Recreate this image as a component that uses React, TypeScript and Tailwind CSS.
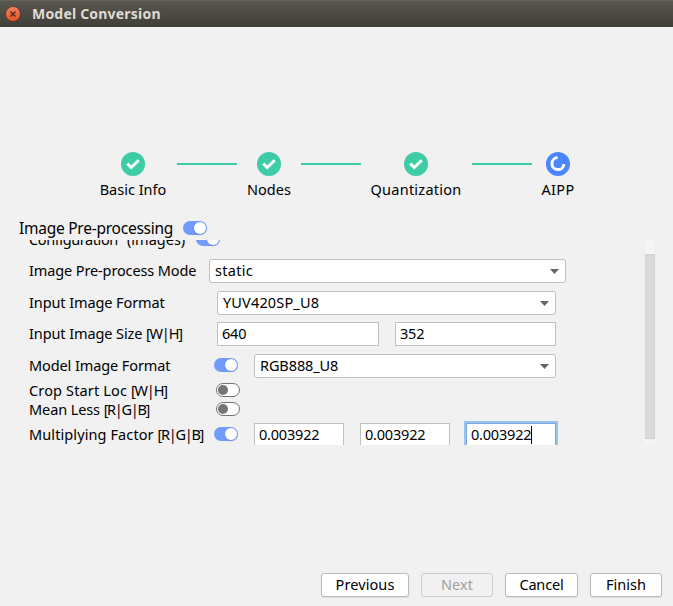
import type { ReactNode } from "react";

function DoneIcon() {
  return (
    <svg width="24" height="24" viewBox="0 0 24 24" className="block">
      <circle cx="12" cy="12" r="12" fill="#3dcca6" />
      <path d="M6.3 11.6 L10.3 15.5 L17.7 8.2" fill="none" stroke="#fff" strokeWidth="3" />
    </svg>
  );
}

function ActiveIcon() {
  return (
    <svg width="24" height="24" viewBox="0 0 24 24" className="block">
      <circle cx="12" cy="12" r="12" fill="#4a86ff" />
      <path d="M11.6 5.6 A6 6 0 1 0 17.9 12" fill="none" stroke="#fff" strokeWidth="3" />
    </svg>
  );
}

function Step({ label, className, active }: { label: string; className: string; active?: boolean }) {
  return (
    <div className={`flex flex-col items-center ${className}`}>
      {active ? <ActiveIcon /> : <DoneIcon />}
      <span className="mt-px leading-[24px]">{label}</span>
    </div>
  );
}

function Line({ className }: { className: string }) {
  return <div className={`mt-[11px] mr-[10px] h-[2px] w-[60px] bg-[#3dcca6] ${className}`} />;
}

function Toggle({ on, className = "" }: { on?: boolean; className?: string }) {
  return on ? (
    <div className={`flex h-[14px] w-6 shrink-0 items-center justify-end rounded-full bg-[#729bfb] ${className}`}>
      <div className="mr-px size-3 rounded-full bg-white shadow-sm" />
    </div>
  ) : (
    <div className={`flex h-[14px] w-6 shrink-0 items-center rounded-full border border-[#727272] bg-white ${className}`}>
      <div className="ml-px size-[10px] rounded-full bg-[#757575]" />
    </div>
  );
}

function Select({ children, className }: { children: ReactNode; className: string }) {
  return (
    <div className={`flex h-6 shrink-0 items-center justify-between rounded-[3px] border border-[#c0c0c0] bg-white pr-[6px] pl-[5px] ${className}`}>
      <span>{children}</span>
      <svg width="9" height="5" viewBox="0 0 9 5">
        <path d="M0 0H9L4.5 5Z" fill="#666" />
      </svg>
    </div>
  );
}

function Field({ children, className }: { children: ReactNode; className: string }) {
  return (
    <div className={`flex h-6 shrink-0 items-center border bg-white pl-1 ${className}`}>
      {children}
    </div>
  );
}

function Button({ children, className }: { children: ReactNode; className: string }) {
  return (
    <button className={`h-6 rounded-[3px] border pb-[2px] leading-[20px] ${className}`}>{children}</button>
  );
}

const enabled = "border-[#b9b9b9] bg-white shadow-[0_1px_1px_rgba(0,0,0,0.08)]";

export default function App() {
  return (
    <div className="flex h-[606px] w-[673px] flex-col overflow-hidden bg-[#f1f1f1] font-['Noto_Sans','Open_Sans',sans-serif] text-[14.5px] whitespace-nowrap text-black">
      <header className="flex h-[27px] items-center border-t border-[#66645a] bg-linear-to-b from-[#59574f] to-[#3f3e39] pl-[5px]">
        <svg width="16" height="16" viewBox="0 0 16 16">
          <defs>
            <linearGradient id="close" x1="0" y1="0" x2="0" y2="1">
              <stop offset="0" stopColor="#f58363" />
              <stop offset="1" stopColor="#e2511f" />
            </linearGradient>
          </defs>
          <circle cx="8" cy="8" r="7.5" fill="url(#close)" stroke="#4a2e22" strokeWidth="0.7" />
          <path d="M5.5 5.5L10.5 10.5M10.5 5.5L5.5 10.5" stroke="#45271b" strokeWidth="1.2" />
        </svg>
        <h1 className="ml-[11px] text-[14px] leading-[26px] font-bold tracking-[0.2px] text-[#dfdbd2]">Model Conversion</h1>
      </header>

      <nav className="mt-[125px] flex h-[50px] items-start pl-[100px]">
        <Step label="Basic Info" className="w-[66px]" />
        <Line className="ml-[11px]" />
        <Step label="Nodes" className="w-[44px]" />
        <Line className="ml-[10px]" />
        <Step label="Quantization" className="w-[90px] tracking-[0.25px]" />
        <Line className="ml-[11px]" />
        <Step label="AIPP" className="ml-[-1px] w-[34px] tracking-[0.3px]" active />
      </nav>

      <div className="mt-[14px] flex h-6 items-center pl-[19px]">
        <h2 className="w-[164px] text-[15.5px] leading-6 tracking-[-0.25px]">Image Pre-processing</h2>
        <Toggle on />
      </div>

      <main className="flex h-[205px] justify-between overflow-hidden pr-[18px] pl-[29px]">
        <div className="-mt-[13px] flex h-[230px] shrink-0 flex-col">
          <div className="flex h-6 items-center">
            <span className="mt-[2px] w-[98px] tracking-[-0.4px]">Configuration</span>
            <span className="mt-[2px] w-[69px]">(images)</span>
            <Toggle on />
          </div>
          <div className="mt-2 flex h-6 items-center">
            <span className="w-[180px] tracking-[-0.12px]">Image Pre-process Mode</span>
            <Select className="w-[357px] tracking-[0.3px]">static</Select>
          </div>
          <div className="mt-2 flex h-6 items-center">
            <span className="w-[188px] tracking-[-0.1px]">Input Image Format</span>
            <Select className="w-[339px] tracking-[0.15px]">YUV420SP_U8</Select>
          </div>
          <div className="mt-[7px] flex h-6 items-center">
            <span className="w-[188px] tracking-[-0.1px]">
              Input Image Size <span className="tracking-[-1.2px]">[W|H]</span>
            </span>
            <Field className="mr-4 w-[162px] border-[#c0c0c0] tracking-[-0.2px]">640</Field>
            <Field className="w-[161px] border-[#c0c0c0] tracking-[-0.2px]">352</Field>
          </div>
          <div className="mt-2 flex h-6 items-center">
            <span className="w-[185px] tracking-[-0.1px]">Model Image Format</span>
            <Toggle on className="mr-4 mb-[2px]" />
            <Select className="w-[302px] tracking-[-0.1px]">RGB888_U8</Select>
          </div>
          <div className="mt-[3px] flex h-[19px] items-center">
            <span className="w-[187px] tracking-[0.15px]">
              Crop Start Loc <span className="tracking-[-1.2px]">[W|H]</span>
            </span>
            <Toggle className="mb-px" />
          </div>
          <div className="flex h-[19px] items-center">
            <span className="w-[187px] tracking-[-0.1px]">
              Mean Less <span className="tracking-[-1.3px]">[R|G|B]</span>
            </span>
            <Toggle className="mb-px" />
          </div>
          <div className="mt-1 flex h-6 items-center">
            <span className="w-[185px] tracking-[0.1px]">
              Multiplying Factor <span className="tracking-[-1.3px]">[R|G|B]</span>
            </span>
            <Toggle on className="mr-4 mb-[2px]" />
            <Field className="mr-4 w-[90px] border-[#c0c0c0] tracking-[-0.2px]">0.003922</Field>
            <Field className="mr-4 w-[90px] border-[#c0c0c0] tracking-[-0.2px]">0.003922</Field>
            <Field className="w-[90px] border-[#7eaadb] tracking-[-0.2px] ring-2 ring-[#97c3f3]">
              0.003922
              <div className="h-[18px] w-px bg-black" />
            </Field>
          </div>
        </div>
        <div className="h-full w-[10px] bg-[#f5f5f5] pt-[14px]">
          <div className="h-[185px] border border-[#d2d2d2] bg-[#dadada]" />
        </div>
      </main>

      <footer className="mt-[128px] flex pl-[321px]">
        <Button className={`mr-3 w-[88px] tracking-[0.1px] ${enabled}`}>Previous</Button>
        <Button className="mr-3 w-[72px] border-[#cdcdcd] text-[#a0a0a0]">Next</Button>
        <Button className={`mr-3 w-[73px] tracking-[-0.15px] ${enabled}`}>Cancel</Button>
        <Button className={`w-[72px] ${enabled}`}>Finish</Button>
      </footer>
    </div>
  );
}
